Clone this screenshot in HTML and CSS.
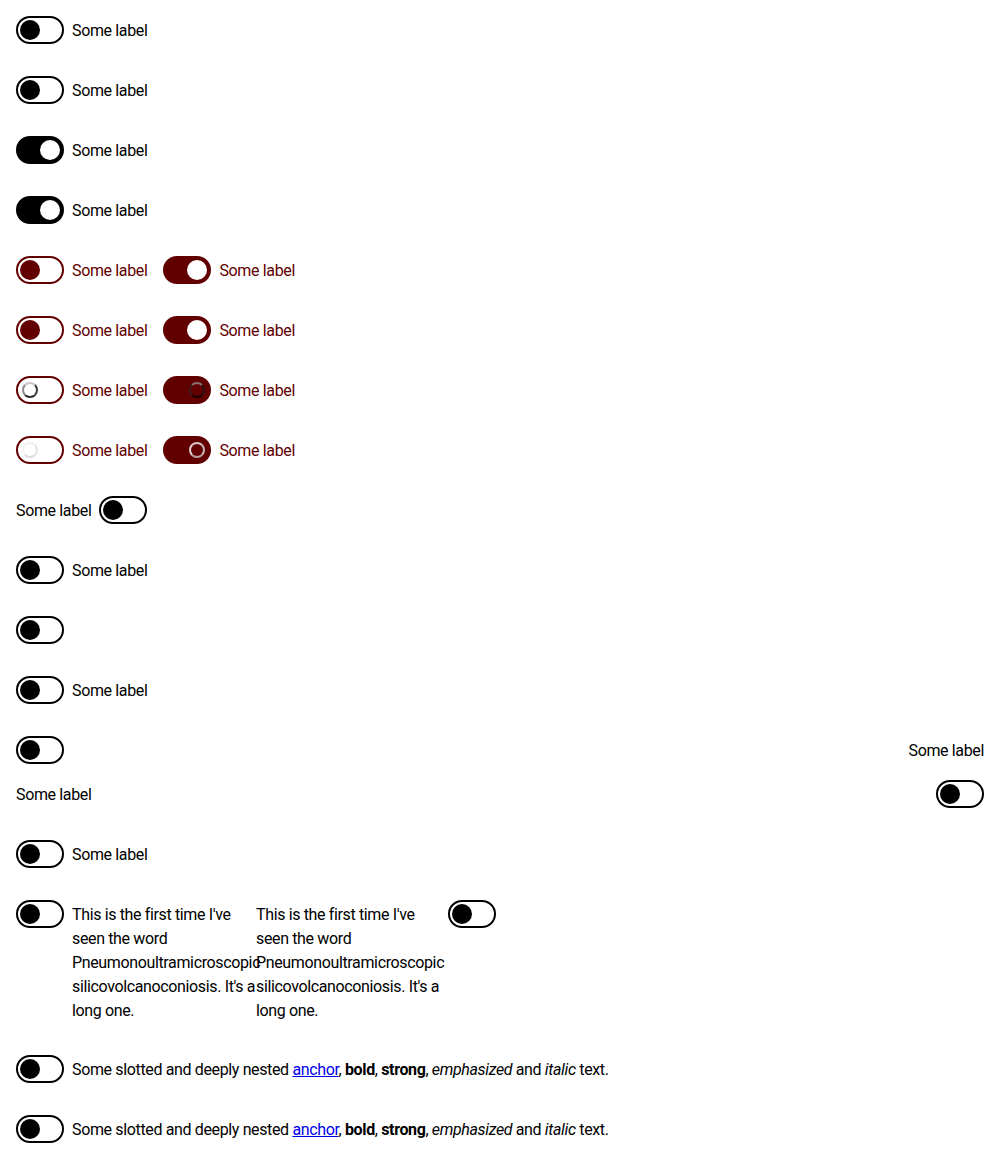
FILE: index.html
```html
<!DOCTYPE html>
<html lang="en">
<head>
<meta charset="utf-8">
<title>Switch</title>
<link rel="stylesheet" href="styles.css">
</head>
<body>
<div class="row"><label class="item"><span class="switch"><span class="knob"></span></span><span class="label">Some label</span></label></div>
<div class="row"><label class="item"><span class="switch"><span class="knob"></span></span><span class="label">Some label</span></label></div>
<div class="row"><label class="item"><span class="switch on"><span class="knob"></span></span><span class="label">Some label</span></label></div>
<div class="row"><label class="item"><span class="switch on"><span class="knob"></span></span><span class="label">Some label</span></label></div>
<div class="row pair">
  <label class="item red"><span class="switch"><span class="knob"></span></span><span class="label">Some label</span></label>
  <label class="item red"><span class="switch on"><span class="knob"></span></span><span class="label">Some label</span></label>
</div>
<div class="row pair">
  <label class="item red"><span class="switch"><span class="knob"></span></span><span class="label">Some label</span></label>
  <label class="item red"><span class="switch on"><span class="knob"></span></span><span class="label">Some label</span></label>
</div>
<div class="row pair">
  <label class="item red"><span class="switch loading"><span class="spinner dark"></span></span><span class="label">Some label</span></label>
  <label class="item red"><span class="switch on loading"><span class="spinner dark"></span></span><span class="label">Some label</span></label>
</div>
<div class="row pair">
  <label class="item red"><span class="switch loading"><span class="spinner faint"></span></span><span class="label">Some label</span></label>
  <label class="item red"><span class="switch on loading"><span class="spinner light"></span></span><span class="label">Some label</span></label>
</div>
<div class="row"><label class="item"><span class="label">Some label</span><span class="switch"><span class="knob"></span></span></label></div>
<div class="row"><label class="item"><span class="switch"><span class="knob"></span></span><span class="label">Some label</span></label></div>
<div class="row"><label class="item"><span class="switch"><span class="knob"></span></span></label></div>
<div class="row"><label class="item"><span class="switch"><span class="knob"></span></span><span class="label">Some label</span></label></div>
<div class="row tight"><label class="item stretch"><span class="switch"><span class="knob"></span></span><span class="label">Some label</span></label></div>
<div class="row"><label class="item stretch"><span class="label">Some label</span><span class="switch"><span class="knob"></span></span></label></div>
<div class="row"><label class="item"><span class="switch"><span class="knob"></span></span><span class="label">Some label</span></label></div>
<div class="row pair-long">
  <label class="item long"><span class="switch"><span class="knob"></span></span><span class="label">This is the first time I've seen the word Pneumonoultramicroscopic<wbr>silicovolcanoconiosis. It's a long one.</span></label>
  <label class="item long"><span class="label">This is the first time I've seen the word Pneumonoultramicroscopic<wbr>silicovolcanoconiosis. It's a long one.</span><span class="switch"><span class="knob"></span></span></label>
</div>
<div class="row"><label class="item"><span class="switch"><span class="knob"></span></span><span class="label">Some slotted and deeply nested <a href="#">anchor</a>, <b>bold</b>, <strong>strong</strong>, <em>emphasized</em> and <i>italic</i> text.</span></label></div>
<div class="row last"><label class="item"><span class="switch"><span class="knob"></span></span><span class="label">Some slotted and deeply nested <a href="#">anchor</a>, <b>bold</b>, <strong>strong</strong>, <em>emphasized</em> and <i>italic</i> text.</span></label></div>
</body>
</html>
```
FILE: styles.css
```css
html, body {
  margin: 0;
  background: #fff;
}
body {
  padding: 16px;
  font-family: Roboto, "Liberation Sans", sans-serif;
  font-size: 16px;
  line-height: 24px;
  letter-spacing: -0.36px;
  color: #000;
}
.row {
  margin-bottom: 32px;
  display: flex;
}
.row.tight { margin-bottom: 16px; }
.row.last { margin-bottom: 0; }
.pair { gap: 16px; }
.item {
  display: flex;
  align-items: flex-start;
  gap: 8px;
  cursor: pointer;
}
.item .label { padding-top: 3px; }
.item.stretch {
  flex: 1;
  justify-content: space-between;
}
.item.long { width: 240px; flex: none; }
.item.long .label { width: 184px; flex: none; }
.red { color: #620000; }
.switch {
  flex: none;
  box-sizing: border-box;
  width: 48px;
  height: 28px;
  border: 2px solid #000;
  border-radius: 14px;
  background: #fff;
  position: relative;
  display: block;
}
.switch .knob {
  position: absolute;
  left: 2px;
  top: 2px;
  width: 20px;
  height: 20px;
  border-radius: 50%;
  background: #000;
}
.switch.on { background: #000; }
.switch.on .knob { left: 22px; background: #fff; }
.red .switch { border-color: #620000; }
.red .switch .knob { background: #620000; }
.red .switch.on { background: #620000; }
.red .switch.on .knob { background: #fff; }
.spinner {
  position: absolute;
  top: 4px;
  left: 4px;
  width: 16px;
  height: 16px;
  box-sizing: border-box;
  border-radius: 50%;
  border: 2px solid #bdbdbd;
}
.switch.on .spinner { left: 24px; }
.spinner.dark {
  border-color: #c8c8c8 #3a3a3a #2a2a2a #8a8a8a;
}
.switch.on .spinner.dark {
  border-color: #8a7070 #2a1010 #1a0000 #3a1a1a;
}
.spinner.faint {
  border-color: #f0f0f0 #e4e4e4 #dcdcdc #f4f4f4;
}
.spinner.light {
  border-color: #d8c8c8 #c8b8b8 #b8a0a0 #e0d0d0;
}
a { color: #0000ee; text-decoration: underline; }
b, strong { font-weight: 700; }
```
